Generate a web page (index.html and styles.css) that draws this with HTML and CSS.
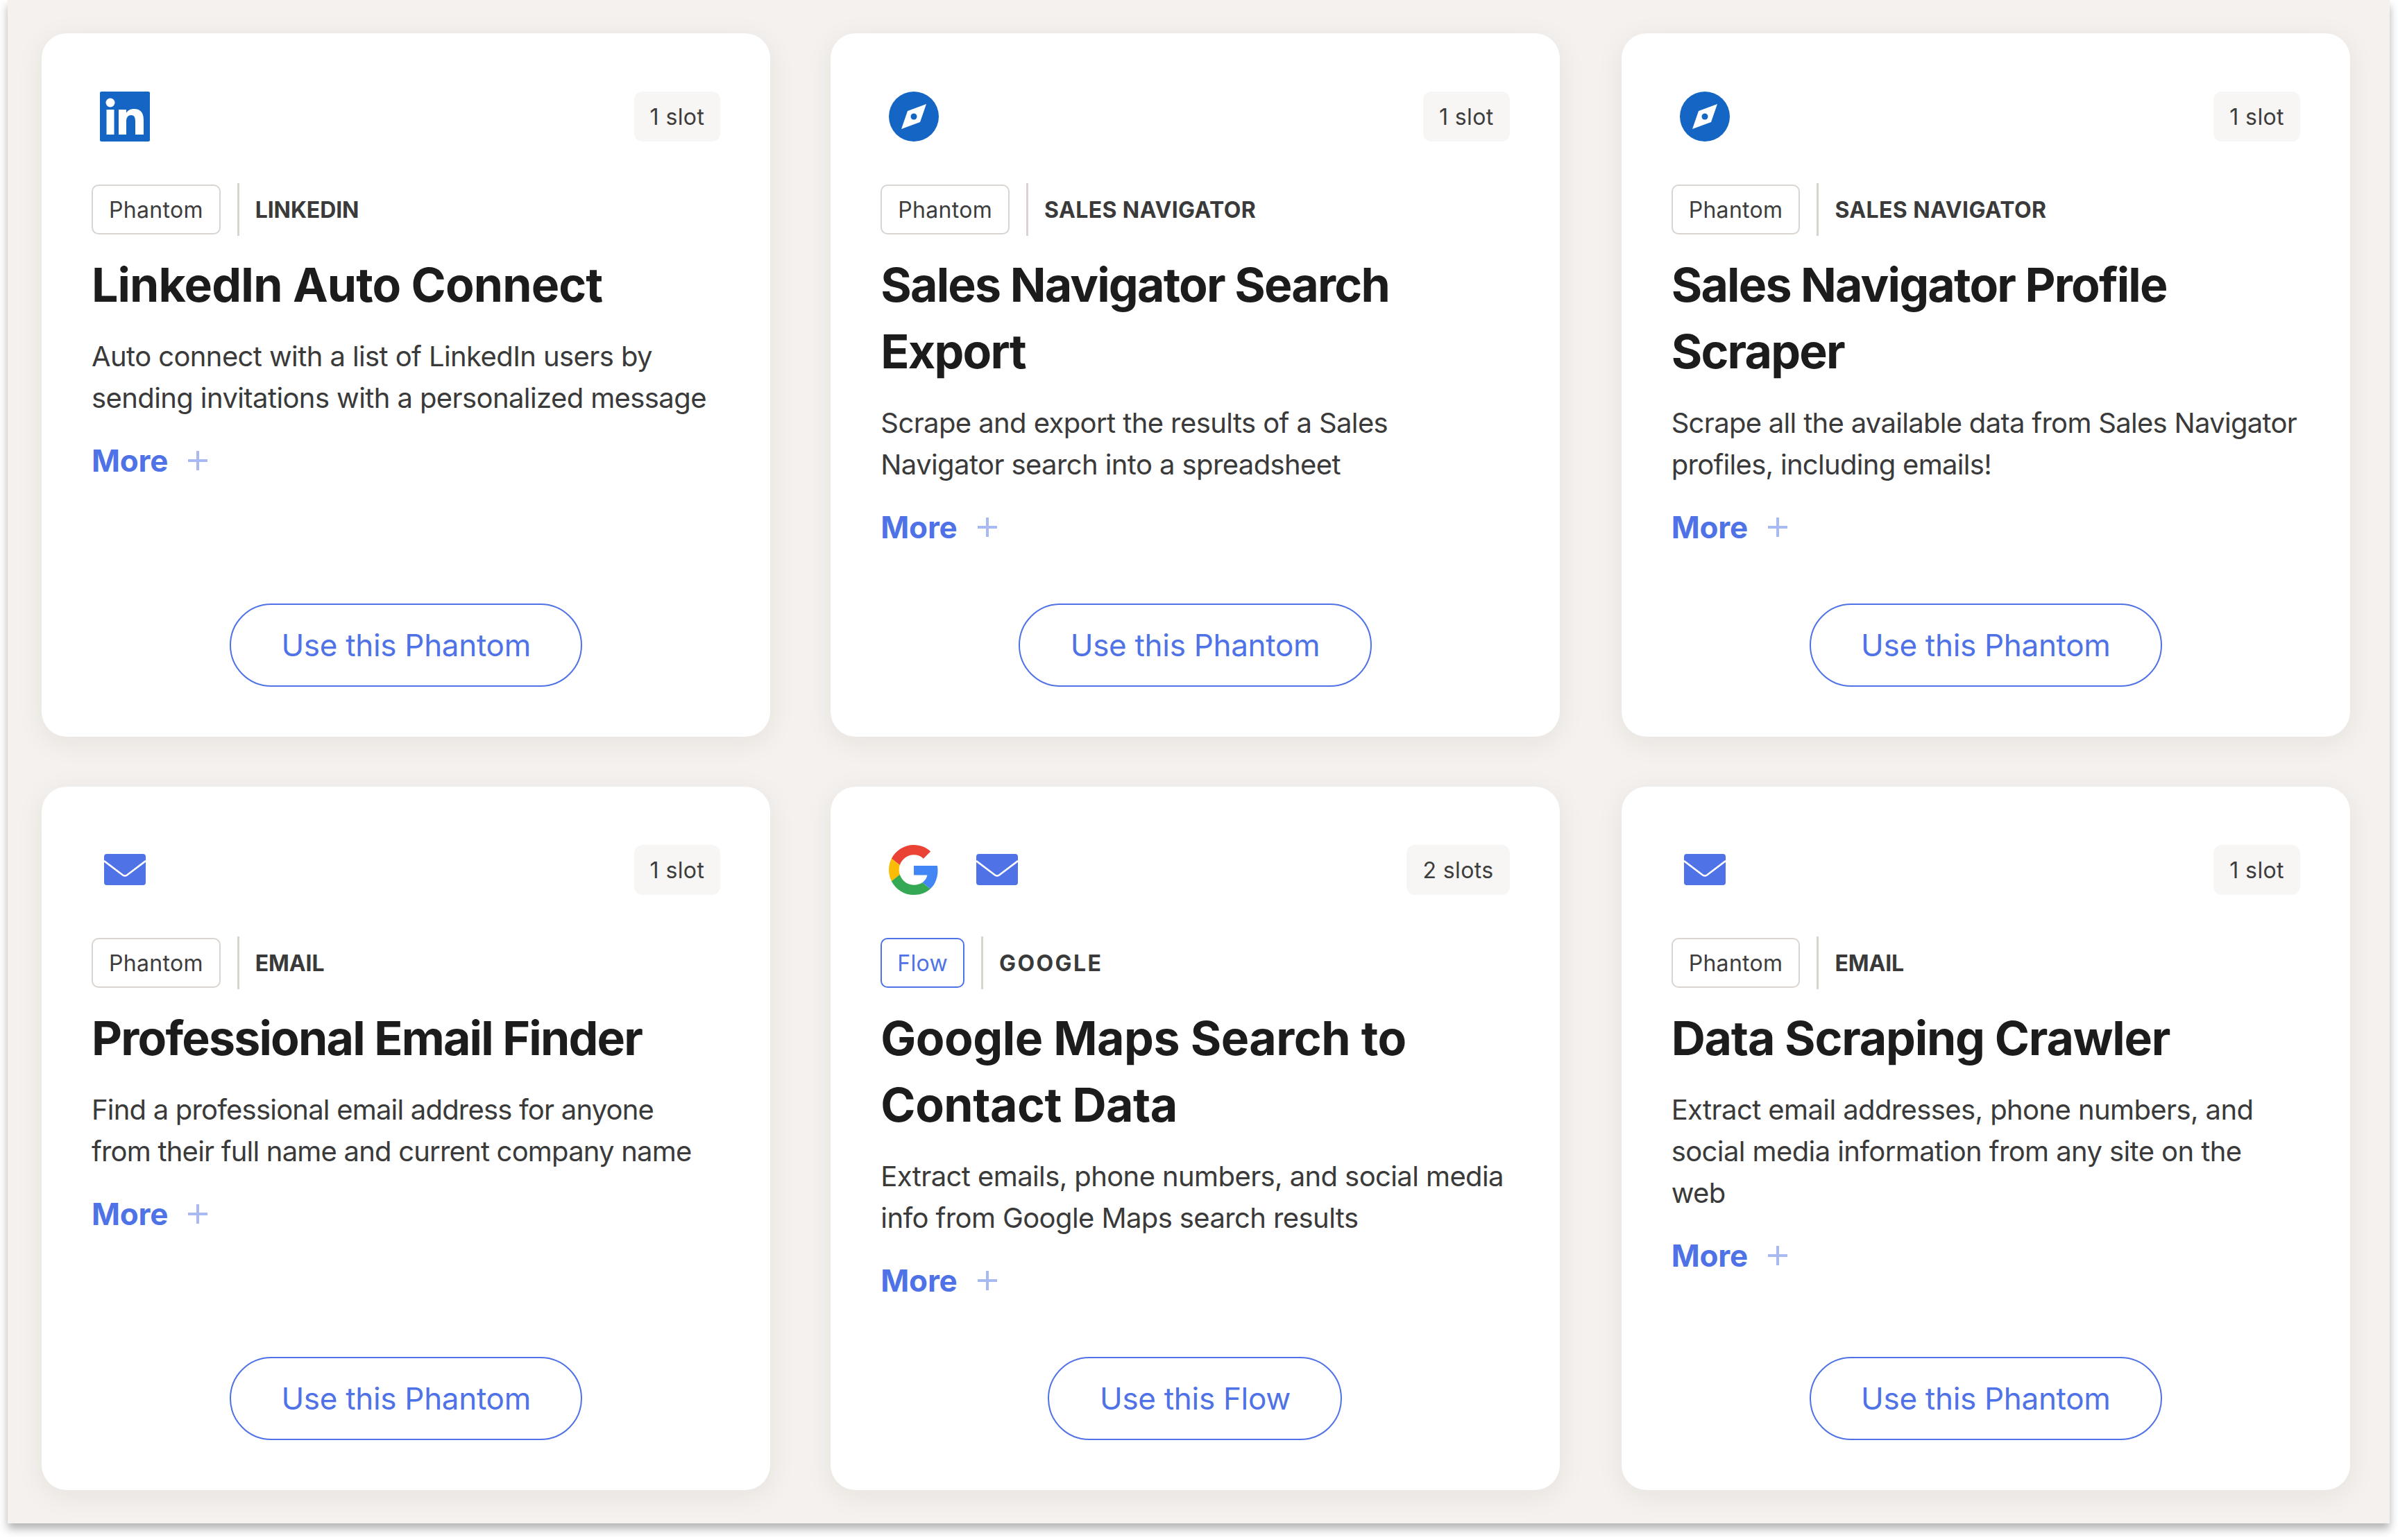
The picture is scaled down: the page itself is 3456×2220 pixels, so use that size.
FILE: index.html
```html
<!DOCTYPE html>
<html lang="en">
<head>
<meta charset="utf-8">
<title>Phantoms</title>
<link rel="stylesheet" href="styles.css">
</head>
<body>
<svg class="defs" width="0" height="0" aria-hidden="true">
  <symbol id="i-linkedin" viewBox="0 0 72 72">
    <rect width="72" height="72" rx="2" fill="#1565c4"/>
    <circle cx="15" cy="16" r="6.5" fill="#fff"/>
    <rect x="9.5" y="26" width="11" height="36" fill="#fff"/>
    <path fill="#fff" d="M27 26h11v5c2-4 6-6 11-6c10 0 14 6 14 16v21H51V43c0-5-1-9-6-9s-7 4-7 9v19H27z"/>
  </symbol>
  <symbol id="i-compass" viewBox="0 0 72 72">
    <circle cx="36" cy="36" r="36" fill="#1565c4"/>
    <path fill="#fff" d="M54 18L45 44L18 54L27 28z"/>
    <circle cx="36" cy="36" r="4.5" fill="#1565c4"/>
  </symbol>
  <symbol id="i-mail" viewBox="0 0 60 45">
    <rect width="60" height="45" rx="4" fill="#4f72e6"/>
    <path fill="none" stroke="#fff" stroke-width="2.6" d="M0 10L27 30.5Q30 32.5 33 30.5L60 10"/>
  </symbol>
  <symbol id="i-google" viewBox="0 0 48 48">
    <path fill="#EA4335" d="M24 9.5c3.54 0 6.71 1.22 9.21 3.6l6.85-6.85C35.9 2.38 30.47 0 24 0 14.62 0 6.51 5.38 2.56 13.22l7.98 6.19C12.43 13.72 17.74 9.5 24 9.5z"/>
    <path fill="#4285F4" d="M46.98 24.55c0-1.57-.15-3.09-.38-4.55H24v9.02h12.94c-.58 2.96-2.26 5.48-4.78 7.18l7.73 6c4.51-4.18 7.09-10.36 7.09-17.65z"/>
    <path fill="#FBBC05" d="M10.53 28.59c-.48-1.45-.76-2.99-.76-4.59s.27-3.14.76-4.59l-7.98-6.19C.92 16.46 0 20.12 0 24c0 3.88.92 7.54 2.56 10.78l7.97-6.19z"/>
    <path fill="#34A853" d="M24 48c6.48 0 11.93-2.13 15.89-5.81l-7.73-6c-2.15 1.45-4.92 2.3-8.16 2.3-6.26 0-11.57-4.22-13.47-9.91l-7.98 6.19C6.51 42.62 14.62 48 24 48z"/>
  </symbol>
</svg>
<main class="panel">
  <article class="card">
    <header class="card-top">
      <div class="icons"><span class="icon-box"><svg class="icon"><use href="#i-linkedin"/></svg></span></div>
      <span class="slots">1 slot</span>
    </header>
    <div class="meta"><span class="tag">Phantom</span><span class="rule"></span><span class="label">LINKEDIN</span></div>
    <h2 class="title title-wide">LinkedIn Auto Connect</h2>
    <p class="desc">Auto connect with a list of LinkedIn users by sending invitations with a personalized message</p>
    <a class="more">More<span class="plus"></span></a>
    <a class="cta">Use this Phantom</a>
  </article>
  <article class="card">
    <header class="card-top">
      <div class="icons"><span class="icon-box"><svg class="icon"><use href="#i-compass"/></svg></span></div>
      <span class="slots">1 slot</span>
    </header>
    <div class="meta"><span class="tag">Phantom</span><span class="rule"></span><span class="label label-long">SALES NAVIGATOR</span></div>
    <h2 class="title title-tight">Sales Navigator Search Export</h2>
    <p class="desc">Scrape and export the results of a Sales Navigator search into a spreadsheet</p>
    <a class="more">More<span class="plus"></span></a>
    <a class="cta">Use this Phantom</a>
  </article>
  <article class="card">
    <header class="card-top">
      <div class="icons"><span class="icon-box"><svg class="icon"><use href="#i-compass"/></svg></span></div>
      <span class="slots">1 slot</span>
    </header>
    <div class="meta"><span class="tag">Phantom</span><span class="rule"></span><span class="label label-long">SALES NAVIGATOR</span></div>
    <h2 class="title title-tight">Sales Navigator Profile Scraper</h2>
    <p class="desc desc-snug">Scrape all the available data from Sales Navigator profiles, including emails!</p>
    <a class="more">More<span class="plus"></span></a>
    <a class="cta">Use this Phantom</a>
  </article>
  <article class="card">
    <header class="card-top">
      <div class="icons"><span class="icon-box"><svg class="icon-mail"><use href="#i-mail"/></svg></span></div>
      <span class="slots">1 slot</span>
    </header>
    <div class="meta"><span class="tag">Phantom</span><span class="rule"></span><span class="label">EMAIL</span></div>
    <h2 class="title title-tight">Professional Email Finder</h2>
    <p class="desc desc-narrow">Find a professional email address for anyone from their full name and current company name</p>
    <a class="more">More<span class="plus"></span></a>
    <a class="cta">Use this Phantom</a>
  </article>
  <article class="card">
    <header class="card-top">
      <div class="icons"><span class="icon-box"><svg class="icon"><use href="#i-google"/></svg></span><span class="icon-box"><svg class="icon-mail"><use href="#i-mail"/></svg></span></div>
      <span class="slots">2 slots</span>
    </header>
    <div class="meta"><span class="tag tag-flow">Flow</span><span class="rule"></span><span class="label label-round">GOOGLE</span></div>
    <h2 class="title title-loose">Google Maps Search to Contact Data</h2>
    <p class="desc">Extract emails, phone numbers, and social media info from Google Maps search results</p>
    <a class="more">More<span class="plus"></span></a>
    <a class="cta">Use this Flow</a>
  </article>
  <article class="card">
    <header class="card-top">
      <div class="icons"><span class="icon-box"><svg class="icon-mail"><use href="#i-mail"/></svg></span></div>
      <span class="slots">1 slot</span>
    </header>
    <div class="meta"><span class="tag">Phantom</span><span class="rule"></span><span class="label">EMAIL</span></div>
    <h2 class="title title-mid">Data Scraping Crawler</h2>
    <p class="desc">Extract email addresses, phone numbers, and social media information from any site on the web</p>
    <a class="more">More<span class="plus"></span></a>
    <a class="cta">Use this Phantom</a>
  </article>
</main>
</body>
</html>
```
FILE: styles.css
```css
* { box-sizing: border-box; }
html, body { margin: 0; padding: 0; background: #fff; }
body { width: 3456px; height: 2220px; overflow: hidden; font-family: "Inter", "Liberation Sans", sans-serif; color: #3a3a3a; }
.defs { position: absolute; }
.panel {
  margin-left: 11px;
  width: 3433px;
  height: 2196px;
  padding: 48px 57px 48px 49px;
  background: #f4f1ee;
  box-shadow: 0 8px 12px rgba(0, 0, 0, .3);
  display: grid;
  grid-template-columns: repeat(3, 1fr);
  grid-auto-rows: 1fr;
  gap: 72px 88px;
}
.card {
  background: #fff;
  border-radius: 36px;
  padding: 84px 72px 72px;
  display: flex;
  flex-direction: column;
  box-shadow: 0 8px 40px rgba(60, 40, 30, .07);
}
.card:nth-child(3n+2) { margin-left: -1px; margin-right: 1px; }
.card-top { display: flex; justify-content: space-between; align-items: center; height: 72px; margin-bottom: 60px; }
.icons { display: flex; gap: 24px; }
.icon-box { width: 96px; height: 72px; display: flex; align-items: center; justify-content: center; }
.icon { width: 72px; height: 72px; display: block; }
.icon-mail { width: 60px; height: 45px; display: block; margin-top: -2px; }
.slots { height: 72px; padding: 0 23px; display: flex; align-items: center; background: #f8f6f4; border-radius: 12px; font-size: 32px; letter-spacing: .4px; color: #3d3d3d; }
.meta { display: flex; align-items: center; height: 76px; }
.tag { height: 72px; padding: 0 23px; display: flex; align-items: center; border: 2.5px solid #d9d4d0; border-radius: 10px; font-size: 32px; letter-spacing: .3px; color: #3d3d3d; }
.tag-flow { padding: 0 22px; border-color: #4f72e6; color: #4f72e6; }
.rule { width: 3px; height: 76px; background: #d9d4d0; margin: 0 23px 0 24px; }
.label { font-size: 32px; font-weight: 700; letter-spacing: -.1px; color: #3a3a3a; }
.label-long { letter-spacing: .4px; }
.label-round { letter-spacing: 2.4px; }
.title { margin: 22px 0 0; font-size: 68px; line-height: 96px; font-weight: 700; letter-spacing: -1.5px; color: #1c1c1c; }
.title-wide { letter-spacing: -.9px; }
.title-tight { letter-spacing: -1.8px; }
.title-mid { letter-spacing: -1.2px; }
.title-loose { letter-spacing: -.5px; }
.desc { margin: 26px 0 0; font-size: 40px; line-height: 60px; font-weight: 400; letter-spacing: -.6px; color: #3a3a3a; }
.desc-snug { letter-spacing: -.7px; margin-right: -4px; }
.desc-narrow { letter-spacing: -.8px; max-width: 885px; }
.more { margin-top: 30px; height: 60px; display: flex; align-items: center; font-size: 44px; font-weight: 700; color: #4f72e6; letter-spacing: -.2px; }
.plus { width: 28px; height: 28px; margin-left: 29px; background: linear-gradient(#a9b9f2, #a9b9f2) center / 100% 4px no-repeat, linear-gradient(#a9b9f2, #a9b9f2) center / 4px 100% no-repeat; }
.cta { margin: auto auto 0; height: 120px; padding: 0 72.5px; display: flex; align-items: center; border: 2.5px solid #4f72e6; border-radius: 60px; font-size: 44px; color: #4f72e6; letter-spacing: -.3px; }
```
